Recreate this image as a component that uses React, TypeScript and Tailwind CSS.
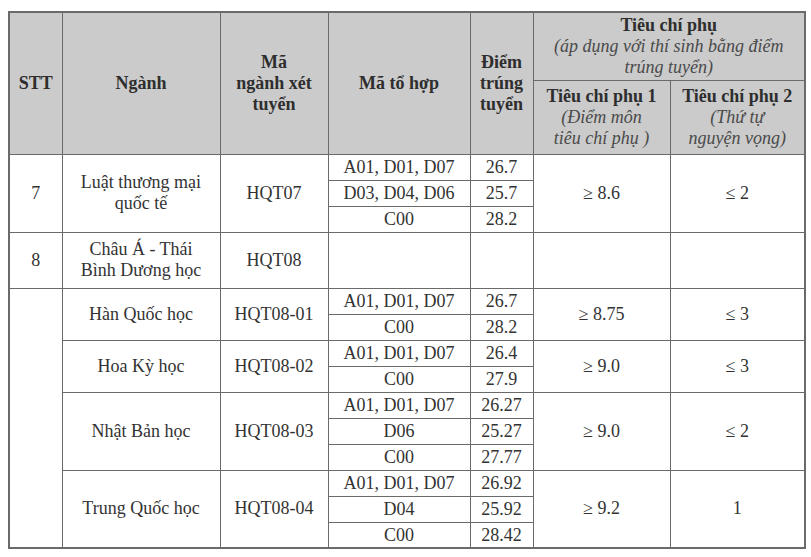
import React from "react";

const B = "border border-[#6a6a6a]";
const H = `${B} bg-[#cbcbcb] font-bold text-[#2e2e2e] text-center align-middle leading-[21px] px-1`;
const D = `${B} text-center align-middle text-[#333] leading-[21px] px-1`;
const S = `${B} text-center align-middle text-[#333] h-[26px] leading-[20px] px-1`;

type Sub = [string, string];

function Group({
  name,
  code,
  subs,
  t1,
  t2,
  stt,
}: {
  name: React.ReactNode;
  code: string;
  subs: Sub[];
  t1: string;
  t2: string;
  stt?: React.ReactNode;
}) {
  return (
    <>
      {subs.map((s, i) => (
        <tr key={i}>
          {i === 0 && stt}
          {i === 0 && (
            <>
              <td rowSpan={subs.length} className={D}>
                {name}
              </td>
              <td rowSpan={subs.length} className={D}>
                {code}
              </td>
            </>
          )}
          <td className={S}>{s[0]}</td>
          <td className={S}>{s[1]}</td>
          {i === 0 && (
            <>
              <td rowSpan={subs.length} className={D}>
                {t1}
              </td>
              <td rowSpan={subs.length} className={D}>
                {t2}
              </td>
            </>
          )}
        </tr>
      ))}
    </>
  );
}

export default function App() {
  return (
    <div
      className="w-[811px] h-[557px] bg-white pt-[11px] pl-[8px]"
      style={{ fontFamily: '"Liberation Serif", "Times New Roman", serif' }}
    >
      <table className="border-collapse table-fixed w-[796px] text-[18px] border-2 border-[#6a6a6a]">
        <colgroup>
          <col className="w-[53px]" />
          <col className="w-[158px]" />
          <col className="w-[108px]" />
          <col className="w-[142px]" />
          <col className="w-[63px]" />
          <col className="w-[137px]" />
          <col className="w-[135px]" />
        </colgroup>
        <thead>
          <tr className="h-[68px]">
            <th rowSpan={2} className={H}>
              STT
            </th>
            <th rowSpan={2} className={H}>
              Ngành
            </th>
            <th rowSpan={2} className={H}>
              Mã
              <br />
              ngành xét
              <br />
              tuyển
            </th>
            <th rowSpan={2} className={H}>
              Mã tổ hợp
            </th>
            <th rowSpan={2} className={`${H} px-0`}>
              Điểm
              <br />
              trúng
              <br />
              tuyển
            </th>
            <th colSpan={2} className={`${H} leading-[20px]`}>
              Tiêu chí phụ
              <br />
              <span className="italic font-normal text-[#4a4a4a]">
                (áp dụng với thí sinh bằng điểm
                <br />
                trúng tuyển)
              </span>
            </th>
          </tr>
          <tr className="h-[74px]">
            <th className={`${H} leading-[20px]`}>
              Tiêu chí phụ 1
              <br />
              <span className="italic font-normal text-[#4a4a4a]">
                (Điểm môn
                <br />
                tiêu chí phụ )
              </span>
            </th>
            <th className={`${H} leading-[20px]`}>
              Tiêu chí phụ 2
              <br />
              <span className="italic font-normal text-[#4a4a4a]">
                (Thứ tự
                <br />
                nguyện vọng)
              </span>
            </th>
          </tr>
        </thead>
        <tbody>
          <Group
            stt={
              <td rowSpan={3} className={D}>
                7
              </td>
            }
            name={
              <>
                Luật thương mại
                <br />
                quốc tế
              </>
            }
            code="HQT07"
            subs={[
              ["A01, D01, D07", "26.7"],
              ["D03, D04, D06", "25.7"],
              ["C00", "28.2"],
            ]}
            t1="≥ 8.6"
            t2="≤ 2"
          />
          <tr className="h-[56px]">
            <td className={D}>8</td>
            <td className={D}>
              Châu Á - Thái
              <br />
              Bình Dương học
            </td>
            <td className={D}>HQT08</td>
            <td className={D}></td>
            <td className={D}></td>
            <td className={D}></td>
            <td className={D}></td>
          </tr>
          <Group
            stt={<td rowSpan={10} className={D}></td>}
            name="Hàn Quốc học"
            code="HQT08-01"
            subs={[
              ["A01, D01, D07", "26.7"],
              ["C00", "28.2"],
            ]}
            t1="≥ 8.75"
            t2="≤ 3"
          />
          <Group
            name="Hoa Kỳ học"
            code="HQT08-02"
            subs={[
              ["A01, D01, D07", "26.4"],
              ["C00", "27.9"],
            ]}
            t1="≥ 9.0"
            t2="≤ 3"
          />
          <Group
            name="Nhật Bản học"
            code="HQT08-03"
            subs={[
              ["A01, D01, D07", "26.27"],
              ["D06", "25.27"],
              ["C00", "27.77"],
            ]}
            t1="≥ 9.0"
            t2="≤ 2"
          />
          <Group
            name="Trung Quốc học"
            code="HQT08-04"
            subs={[
              ["A01, D01, D07", "26.92"],
              ["D04", "25.92"],
              ["C00", "28.42"],
            ]}
            t1="≥ 9.2"
            t2="1"
          />
        </tbody>
      </table>
    </div>
  );
}
